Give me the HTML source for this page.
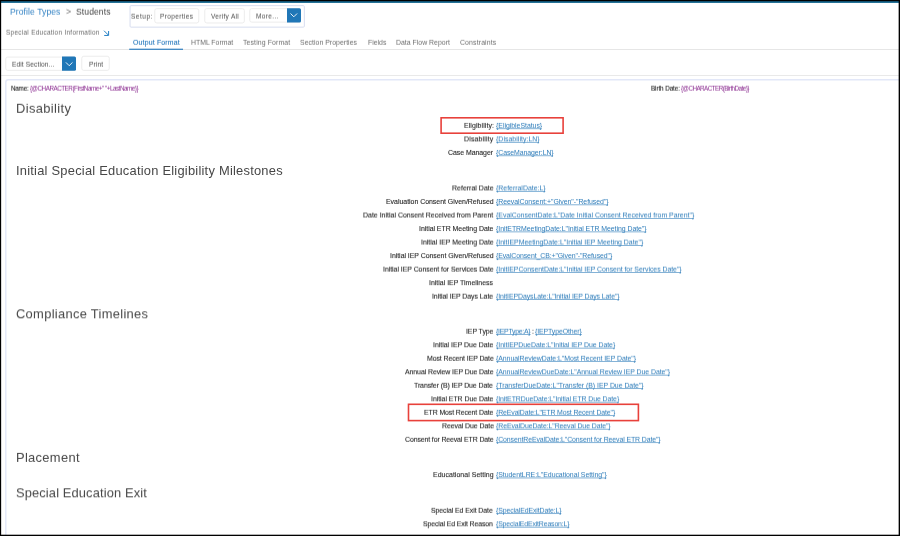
<!DOCTYPE html>
<html lang="en"><head><meta charset="utf-8"><title>Profile Types - Students - Special Education Information</title>
<style>
html,body{margin:0;padding:0;background:#fff;}
body{width:900px;height:536px;position:relative;overflow:hidden;font-family:"Liberation Sans", sans-serif;}
.t{position:absolute;white-space:pre;font-family:"Liberation Sans", sans-serif;}
#pg{position:absolute;left:0;top:0;width:900px;height:536px;overflow:hidden;filter:blur(0.35px);}
.b{position:absolute;box-sizing:border-box;}
h2.t{margin:0;font-weight:normal;}
a.t{text-decoration:none;cursor:pointer;}
header,nav,main,section,.toolbar,.ident{display:block;position:static;margin:0;padding:0;}
u{text-decoration:underline;text-decoration-color:rgba(43,123,185,0.62);}
.t,u{text-decoration-skip-ink:none;text-underline-offset:0px;text-decoration-thickness:1px;}
</style></head><body><div id="pg">
<svg class="b" style="left:0;top:0" width="900" height="536" viewBox="0 0 900 536"><defs><linearGradient id="tg" x1="0" y1="0" x2="0" y2="1"><stop offset="0" stop-color="#083f5c"/><stop offset="1" stop-color="#2f83aa"/></linearGradient></defs><rect x="1.00" y="1.00" width="898.00" height="2.00" fill="url(#tg)" /><rect x="130.05" y="5.65" width="174.30" height="21.50" rx="1" fill="none" stroke="#d3d9ee" stroke-width="0.9"/><rect x="154.75" y="8.65" width="44.00" height="14.30" rx="2" fill="none" stroke="#eaeaea" stroke-width="0.9"/><rect x="204.75" y="8.65" width="39.60" height="14.30" rx="2" fill="none" stroke="#eaeaea" stroke-width="0.9"/><rect x="249.75" y="8.65" width="50.80" height="13.50" rx="2" fill="none" stroke="#eaeaea" stroke-width="0.9"/><path d="M287 8.2 H299.5 Q301 8.2 301 9.7 V21.1 Q301 22.6 299.5 22.6 H287 Z" fill="#2077b7"/><rect x="1.00" y="49.00" width="898.00" height="0.90" fill="#e4e4e4" /><rect x="129.20" y="48.70" width="53.80" height="1.10" fill="#1f76bc" /><rect x="5.75" y="57.05" width="69.80" height="13.30" rx="2" fill="none" stroke="#eaeaea" stroke-width="0.9"/><path d="M62 56.6 H74.5 Q76 56.6 76 58.1 V69.3 Q76 70.8 74.5 70.8 H62 Z" fill="#2077b7"/><rect x="81.75" y="56.25" width="27.50" height="14.10" rx="2" fill="none" stroke="#eaeaea" stroke-width="0.9"/><rect x="1.00" y="75.00" width="898.00" height="0.80" fill="#e4e4e4" /><rect x="5.80" y="79.70" width="898.50" height="479.60" rx="2.5" fill="none" stroke="#e2e7f8" stroke-width="1.4"/><rect x="496.30" y="128.40" width="45.40" height="0.72" fill="#2b7bb9" opacity="0.8"/><rect x="496.30" y="141.92" width="42.80" height="0.72" fill="#2b7bb9" opacity="0.8"/><rect x="496.30" y="155.44" width="56.80" height="0.72" fill="#2b7bb9" opacity="0.8"/><rect x="496.30" y="190.95" width="49.00" height="0.72" fill="#2b7bb9" opacity="0.8"/><rect x="496.30" y="204.48" width="111.80" height="0.72" fill="#2b7bb9" opacity="0.8"/><rect x="496.30" y="218.01" width="197.40" height="0.72" fill="#2b7bb9" opacity="0.8"/><rect x="496.30" y="231.54" width="150.00" height="0.72" fill="#2b7bb9" opacity="0.8"/><rect x="496.30" y="245.07" width="146.40" height="0.72" fill="#2b7bb9" opacity="0.8"/><rect x="496.30" y="258.60" width="115.40" height="0.72" fill="#2b7bb9" opacity="0.8"/><rect x="496.30" y="272.13" width="184.80" height="0.72" fill="#2b7bb9" opacity="0.8"/><rect x="496.30" y="299.19" width="123.00" height="0.72" fill="#2b7bb9" opacity="0.8"/><rect x="496.10" y="334.25" width="34.50" height="0.72" fill="#2b7bb9" opacity="0.8"/><rect x="535.30" y="334.25" width="46.60" height="0.72" fill="#2b7bb9" opacity="0.8"/><rect x="496.30" y="347.76" width="118.40" height="0.72" fill="#2b7bb9" opacity="0.8"/><rect x="496.30" y="361.27" width="139.40" height="0.72" fill="#2b7bb9" opacity="0.8"/><rect x="496.30" y="374.78" width="173.40" height="0.72" fill="#2b7bb9" opacity="0.8"/><rect x="496.30" y="388.29" width="146.80" height="0.72" fill="#2b7bb9" opacity="0.8"/><rect x="496.30" y="401.80" width="122.40" height="0.72" fill="#2b7bb9" opacity="0.8"/><rect x="496.30" y="415.31" width="118.40" height="0.72" fill="#2b7bb9" opacity="0.8"/><rect x="496.30" y="428.82" width="113.80" height="0.72" fill="#2b7bb9" opacity="0.8"/><rect x="496.30" y="442.33" width="163.80" height="0.72" fill="#2b7bb9" opacity="0.8"/><rect x="496.30" y="477.60" width="110.10" height="0.72" fill="#2b7bb9" opacity="0.8"/><rect x="496.30" y="513.30" width="65.00" height="0.72" fill="#2b7bb9" opacity="0.8"/><rect x="496.30" y="526.80" width="73.00" height="0.72" fill="#2b7bb9" opacity="0.8"/><rect x="441.10" y="117.80" width="122.00" height="15.40" rx="0" fill="none" stroke="#e8413b" stroke-width="1.6"/><rect x="408.50" y="404.30" width="229.90" height="16.30" rx="0" fill="none" stroke="#e8413b" stroke-width="1.6"/><path d="M104.0 30.7 L108.4 35.1 M108.6 31.0 V35.45 H104.2" fill="none" stroke="#2580c5" stroke-width="1.0" /><path d="M290.5 13.5 L293.8 16.8 L297.1 13.5" fill="none" stroke="#fff" stroke-width="0.9" /><path d="M65.9 62.4 L69.2 65.7 L72.5 62.4" fill="none" stroke="#fff" stroke-width="0.9" /></svg>
<header>
<a class="t" id="t0" style="top:6.00px;font-size:8.6px;line-height:12px;color:#3483c4;left:10.16px;letter-spacing:0.075px;transform:translateY(-0.30px) perspective(1000px) rotateX(0.01deg);transform-origin:0 50%;">Profile Types</a>
<span class="t" id="t1" style="top:6.00px;font-size:8.8px;line-height:12px;color:#777;left:66.10px;transform:translateY(-0.40px) perspective(1000px) rotateX(0.01deg);transform-origin:0 50%;">&gt;</span>
<span class="t" id="t2" style="top:6.00px;font-size:8.6px;line-height:12px;color:#444;left:76.09px;letter-spacing:0.083px;transform:translateY(-0.30px) perspective(1000px) rotateX(0.01deg);transform-origin:0 50%;">Students</span>
<span class="t" id="t3" style="top:27.50px;font-size:6.4px;line-height:10px;color:#6a6a6a;left:5.57px;letter-spacing:0.304px;transform:translateY(-0.30px) perspective(1000px) rotateX(0.01deg);transform-origin:0 50%;">Special Education Information</span>
<span class="t" id="t4" style="top:11.50px;font-size:6.5px;line-height:10px;color:#4c4c4c;left:131.22px;letter-spacing:0.509px;transform:translateY(-0.30px) perspective(1000px) rotateX(0.01deg);transform-origin:0 50%;">Setup:</span>
<span class="t" id="t5" style="top:11.50px;font-size:6.5px;line-height:10px;color:#4c4c4c;left:160.25px;letter-spacing:0.374px;transform:translateY(-0.30px) perspective(1000px) rotateX(0.01deg);transform-origin:0 50%;">Properties</span>
<span class="t" id="t6" style="top:11.50px;font-size:6.5px;line-height:10px;color:#4c4c4c;left:210.64px;letter-spacing:0.321px;transform:translateY(-0.30px) perspective(1000px) rotateX(0.01deg);transform-origin:0 50%;">Verify All</span>
<span class="t" id="t7" style="top:11.50px;font-size:6.5px;line-height:10px;color:#4c4c4c;left:256.13px;letter-spacing:0.390px;transform:translateY(-0.50px) perspective(1000px) rotateX(0.01deg);transform-origin:0 50%;">More...</span>
</header>
<nav>
<span class="t" id="t8" style="top:37.50px;font-size:6.9px;line-height:10px;color:#1f74bb;left:132.62px;letter-spacing:0.185px;transform:translateY(-0.20px) perspective(1000px) rotateX(0.01deg);transform-origin:0 50%;-webkit-text-stroke:0.1px #1f74bb;">Output Format</span>
<span class="t" id="t9" style="top:37.50px;font-size:6.9px;line-height:10px;color:#6c6c6c;left:190.87px;letter-spacing:-0.011px;transform:translateY(-0.20px) perspective(1000px) rotateX(0.01deg);transform-origin:0 50%;">HTML Format</span>
<span class="t" id="t10" style="top:37.50px;font-size:6.9px;line-height:10px;color:#6c6c6c;left:242.87px;letter-spacing:0.125px;transform:translateY(-0.20px) perspective(1000px) rotateX(0.01deg);transform-origin:0 50%;">Testing Format</span>
<span class="t" id="t11" style="top:37.50px;font-size:6.9px;line-height:10px;color:#6c6c6c;left:299.98px;letter-spacing:0.042px;transform:translateY(-0.20px) perspective(1000px) rotateX(0.01deg);transform-origin:0 50%;">Section Properties</span>
<span class="t" id="t12" style="top:37.50px;font-size:6.9px;line-height:10px;color:#6c6c6c;left:367.87px;letter-spacing:-0.011px;transform:translateY(-0.20px) perspective(1000px) rotateX(0.01deg);transform-origin:0 50%;">Fields</span>
<span class="t" id="t13" style="top:37.50px;font-size:6.9px;line-height:10px;color:#6c6c6c;left:396.02px;letter-spacing:0.016px;transform:translateY(-0.20px) perspective(1000px) rotateX(0.01deg);transform-origin:0 50%;">Data Flow Report</span>
<span class="t" id="t14" style="top:37.50px;font-size:6.9px;line-height:10px;color:#6c6c6c;left:460.34px;letter-spacing:0.141px;transform:translateY(-0.20px) perspective(1000px) rotateX(0.01deg);transform-origin:0 50%;">Constraints</span>
</nav>
<div class="toolbar">
<span class="t" id="t15" style="top:59.50px;font-size:6.6px;line-height:10px;color:#4c4c4c;left:11.84px;letter-spacing:0.114px;transform:translateY(-0.30px) perspective(1000px) rotateX(0.01deg);transform-origin:0 50%;">Edit Section...</span>
<span class="t" id="t16" style="top:59.50px;font-size:6.6px;line-height:10px;color:#4c4c4c;left:88.55px;letter-spacing:0.160px;transform:translateY(-0.30px) perspective(1000px) rotateX(0.01deg);transform-origin:0 50%;">Print</span>
</div>
<main><div class="ident">
<span class="t" id="t17" style="top:83.50px;font-size:6.3px;line-height:10px;color:#222;left:10.50px;letter-spacing:-0.215px;transform:translateY(-0.30px) perspective(1000px) rotateX(0.01deg);transform-origin:0 50%;-webkit-text-stroke:0.1px #222;">Name:</span>
<span class="t" id="t18" style="top:83.50px;font-size:6.3px;line-height:10px;color:#8a2a8f;left:29.55px;letter-spacing:-0.480px;transform:translateY(-0.30px) perspective(1000px) rotateX(0.01deg);transform-origin:0 50%;">{@CHARACTER(FirstName+" "+LastName)}</span>
<span class="t" id="t19" style="top:83.50px;font-size:6.3px;line-height:10px;color:#222;left:651.00px;letter-spacing:-0.085px;transform:translateY(-0.30px) perspective(1000px) rotateX(0.01deg);transform-origin:0 50%;-webkit-text-stroke:0.1px #222;">Birth Date:</span>
<span class="t" id="t20" style="top:83.50px;font-size:6.3px;line-height:10px;color:#8a2a8f;left:681.45px;letter-spacing:-0.538px;transform:translateY(-0.30px) perspective(1000px) rotateX(0.01deg);transform-origin:0 50%;">{@CHARACTER(BirthDate)}</span>
</div>
<section>
<h2 class="t" id="t21" style="top:99.50px;font-size:12.9px;line-height:18px;color:#474747;left:16.10px;letter-spacing:0.368px;transform:translateY(-0.20px) perspective(1000px) rotateX(0.01deg);transform-origin:0 50%;">Disability</h2>
<span class="t" id="t22" style="top:120.50px;font-size:6.95px;line-height:10px;color:#1f1f1f;right:406.31px;letter-spacing:0.096px;margin-right:-0.096px;transform:translateY(-0.10px) perspective(1000px) rotateX(0.01deg);transform-origin:100% 50%;-webkit-text-stroke:0.1px #1f1f1f;">Eligibility:</span>
<a class="t" id="t23" style="top:120.50px;font-size:6.95px;line-height:10px;color:#2b7bb9;left:496.32px;letter-spacing:-0.032px;transform:translateY(-0.10px) perspective(1000px) rotateX(0.01deg);transform-origin:0 50%;">{EligibleStatus}</a>
<span class="t" id="t24" style="top:133.50px;font-size:6.95px;line-height:10px;color:#1f1f1f;right:406.63px;letter-spacing:0.167px;margin-right:-0.167px;transform:translateY(0.42px) perspective(1000px) rotateX(0.01deg);transform-origin:100% 50%;-webkit-text-stroke:0.1px #1f1f1f;">Disability</span>
<a class="t" id="t25" style="top:133.50px;font-size:6.95px;line-height:10px;color:#2b7bb9;left:496.32px;letter-spacing:0.034px;transform:translateY(0.42px) perspective(1000px) rotateX(0.01deg);transform-origin:0 50%;">{Disability:LN}</a>
<span class="t" id="t26" style="top:147.50px;font-size:6.95px;line-height:10px;color:#1f1f1f;right:406.77px;letter-spacing:-0.044px;margin-right:0.044px;transform:translateY(-0.06px) perspective(1000px) rotateX(0.01deg);transform-origin:100% 50%;-webkit-text-stroke:0.1px #1f1f1f;">Case Manager</span>
<a class="t" id="t27" style="top:147.50px;font-size:6.95px;line-height:10px;color:#2b7bb9;left:496.32px;letter-spacing:-0.090px;transform:translateY(-0.06px) perspective(1000px) rotateX(0.01deg);transform-origin:0 50%;">{CaseManager:LN}</a>
</section>
<section>
<h2 class="t" id="t28" style="top:161.50px;font-size:12.9px;line-height:18px;color:#474747;left:16.00px;letter-spacing:0.230px;transform:translateY(0.00px) perspective(1000px) rotateX(0.01deg);transform-origin:0 50%;">Initial Special Education Eligibility Milestones</h2>
<span class="t" id="t29" style="top:182.50px;font-size:6.95px;line-height:10px;color:#1f1f1f;right:406.50px;letter-spacing:0.028px;margin-right:-0.028px;transform:translateY(0.45px) perspective(1000px) rotateX(0.01deg);transform-origin:100% 50%;-webkit-text-stroke:0.1px #1f1f1f;">Referral Date</span>
<a class="t" id="t30" style="top:182.50px;font-size:6.95px;line-height:10px;color:#2b7bb9;left:496.32px;letter-spacing:-0.010px;transform:translateY(0.45px) perspective(1000px) rotateX(0.01deg);transform-origin:0 50%;">{ReferralDate:L}</a>
<span class="t" id="t31" style="top:196.50px;font-size:6.95px;line-height:10px;color:#1f1f1f;right:406.31px;letter-spacing:-0.013px;margin-right:0.013px;transform:translateY(-0.02px) perspective(1000px) rotateX(0.01deg);transform-origin:100% 50%;-webkit-text-stroke:0.1px #1f1f1f;">Evaluation Consent Given/Refused</span>
<a class="t" id="t32" style="top:196.50px;font-size:6.95px;line-height:10px;color:#2b7bb9;left:496.32px;letter-spacing:-0.046px;transform:translateY(-0.02px) perspective(1000px) rotateX(0.01deg);transform-origin:0 50%;">{ReevalConsent:+"Given"-"Refused"}</a>
<span class="t" id="t33" style="top:210.50px;font-size:6.95px;line-height:10px;color:#1f1f1f;right:406.86px;letter-spacing:0.017px;margin-right:-0.017px;transform:translateY(-0.49px) perspective(1000px) rotateX(0.01deg);transform-origin:100% 50%;-webkit-text-stroke:0.1px #1f1f1f;">Date Initial Consent Received from Parent</span>
<a class="t" id="t34" style="top:210.50px;font-size:6.95px;line-height:10px;color:#2b7bb9;left:496.32px;letter-spacing:-0.011px;transform:translateY(-0.49px) perspective(1000px) rotateX(0.01deg);transform-origin:0 50%;">{EvalConsentDate:L"Date Initial Consent Received from Parent"}</a>
<span class="t" id="t35" style="top:223.50px;font-size:6.95px;line-height:10px;color:#1f1f1f;right:406.74px;letter-spacing:-0.031px;margin-right:0.031px;transform:translateY(0.04px) perspective(1000px) rotateX(0.01deg);transform-origin:100% 50%;-webkit-text-stroke:0.1px #1f1f1f;">Initial ETR Meeting Date</span>
<a class="t" id="t36" style="top:223.50px;font-size:6.95px;line-height:10px;color:#2b7bb9;left:496.32px;letter-spacing:-0.051px;transform:translateY(0.04px) perspective(1000px) rotateX(0.01deg);transform-origin:0 50%;">{InitETRMeetingDate:L"Initial ETR Meeting Date"}</a>
<span class="t" id="t37" style="top:237.50px;font-size:6.95px;line-height:10px;color:#1f1f1f;right:406.31px;letter-spacing:0.014px;margin-right:-0.014px;transform:translateY(-0.43px) perspective(1000px) rotateX(0.01deg);transform-origin:100% 50%;-webkit-text-stroke:0.1px #1f1f1f;">Initial IEP Meeting Date</span>
<a class="t" id="t38" style="top:237.50px;font-size:6.95px;line-height:10px;color:#2b7bb9;left:496.32px;letter-spacing:-0.006px;transform:translateY(-0.43px) perspective(1000px) rotateX(0.01deg);transform-origin:0 50%;">{InitIEPMeetingDate:L"Initial IEP Meeting Date"}</a>
<span class="t" id="t39" style="top:250.50px;font-size:6.95px;line-height:10px;color:#1f1f1f;right:406.31px;letter-spacing:-0.034px;margin-right:0.034px;transform:translateY(0.10px) perspective(1000px) rotateX(0.01deg);transform-origin:100% 50%;-webkit-text-stroke:0.1px #1f1f1f;">Initial IEP Consent Given/Refused</span>
<a class="t" id="t40" style="top:250.50px;font-size:6.95px;line-height:10px;color:#2b7bb9;left:496.32px;letter-spacing:-0.099px;transform:translateY(0.10px) perspective(1000px) rotateX(0.01deg);transform-origin:0 50%;">{EvalConsent_CB:+"Given"-"Refused"}</a>
<span class="t" id="t41" style="top:264.50px;font-size:6.95px;line-height:10px;color:#1f1f1f;right:406.31px;letter-spacing:-0.039px;margin-right:0.039px;transform:translateY(-0.37px) perspective(1000px) rotateX(0.01deg);transform-origin:100% 50%;-webkit-text-stroke:0.1px #1f1f1f;">Initial IEP Consent for Services Date</span>
<a class="t" id="t42" style="top:264.50px;font-size:6.95px;line-height:10px;color:#2b7bb9;left:496.32px;letter-spacing:-0.045px;transform:translateY(-0.37px) perspective(1000px) rotateX(0.01deg);transform-origin:0 50%;">{InitIEPConsentDate:L"Initial IEP Consent for Services Date"}</a>
<span class="t" id="t43" style="top:277.50px;font-size:6.95px;line-height:10px;color:#1f1f1f;right:406.59px;letter-spacing:0.007px;margin-right:-0.007px;transform:translateY(0.16px) perspective(1000px) rotateX(0.01deg);transform-origin:100% 50%;-webkit-text-stroke:0.1px #1f1f1f;">Initial IEP Timeliness</span>
<span class="t" id="t44" style="top:291.50px;font-size:6.95px;line-height:10px;color:#1f1f1f;right:406.50px;letter-spacing:-0.062px;margin-right:0.062px;transform:translateY(-0.31px) perspective(1000px) rotateX(0.01deg);transform-origin:100% 50%;-webkit-text-stroke:0.1px #1f1f1f;">Initial IEP Days Late</span>
<a class="t" id="t45" style="top:291.50px;font-size:6.95px;line-height:10px;color:#2b7bb9;left:496.32px;letter-spacing:-0.094px;transform:translateY(-0.31px) perspective(1000px) rotateX(0.01deg);transform-origin:0 50%;">{InitIEPDaysLate:L"Initial IEP Days Late"}</a>
</section>
<section>
<h2 class="t" id="t46" style="top:304.50px;font-size:12.9px;line-height:18px;color:#474747;left:15.80px;letter-spacing:0.311px;transform:translateY(0.30px) perspective(1000px) rotateX(0.01deg);transform-origin:0 50%;">Compliance Timelines</h2>
<span class="t" id="t47" style="top:326.50px;font-size:6.95px;line-height:10px;color:#1f1f1f;right:406.74px;letter-spacing:-0.062px;margin-right:0.062px;transform:translateY(-0.25px) perspective(1000px) rotateX(0.01deg);transform-origin:100% 50%;-webkit-text-stroke:0.1px #1f1f1f;">IEP Type</span>
<a class="t" id="t48" style="top:326.50px;font-size:6.95px;line-height:10px;color:#2b7bb9;left:496.30px;letter-spacing:-0.281px;transform:translateY(-0.25px) perspective(1000px) rotateX(0.01deg);transform-origin:0 50%;">{IEPType:A}</a>
<span class="t" id="t49" style="top:326.50px;font-size:6.95px;line-height:10px;color:#1f1f1f;left:532.20px;transform:translateY(-0.25px) perspective(1000px) rotateX(0.01deg);transform-origin:0 50%;-webkit-text-stroke:0.1px #1f1f1f;">:</span>
<a class="t" id="t50" style="top:326.50px;font-size:6.95px;line-height:10px;color:#2b7bb9;left:535.30px;letter-spacing:-0.101px;transform:translateY(-0.25px) perspective(1000px) rotateX(0.01deg);transform-origin:0 50%;">{IEPTypeOther}</a>
<span class="t" id="t51" style="top:339.50px;font-size:6.95px;line-height:10px;color:#1f1f1f;right:406.67px;letter-spacing:-0.005px;margin-right:0.005px;transform:translateY(0.26px) perspective(1000px) rotateX(0.01deg);transform-origin:100% 50%;-webkit-text-stroke:0.1px #1f1f1f;">Initial IEP Due Date</span>
<a class="t" id="t52" style="top:339.50px;font-size:6.95px;line-height:10px;color:#2b7bb9;left:496.32px;letter-spacing:-0.050px;transform:translateY(0.26px) perspective(1000px) rotateX(0.01deg);transform-origin:0 50%;">{InitIEPDueDate:L"Initial IEP Due Date}</a>
<span class="t" id="t53" style="top:353.50px;font-size:6.95px;line-height:10px;color:#1f1f1f;right:406.67px;letter-spacing:-0.089px;margin-right:0.089px;transform:translateY(-0.23px) perspective(1000px) rotateX(0.01deg);transform-origin:100% 50%;-webkit-text-stroke:0.1px #1f1f1f;">Most Recent IEP Date</span>
<a class="t" id="t54" style="top:353.50px;font-size:6.95px;line-height:10px;color:#2b7bb9;left:496.32px;letter-spacing:-0.069px;transform:translateY(-0.23px) perspective(1000px) rotateX(0.01deg);transform-origin:0 50%;">{AnnualReviewDate:L"Most Recent IEP Date"}</a>
<span class="t" id="t55" style="top:366.50px;font-size:6.95px;line-height:10px;color:#1f1f1f;right:406.79px;letter-spacing:-0.079px;margin-right:0.079px;transform:translateY(0.28px) perspective(1000px) rotateX(0.01deg);transform-origin:100% 50%;-webkit-text-stroke:0.1px #1f1f1f;">Annual Review IEP Due Date</span>
<a class="t" id="t56" style="top:366.50px;font-size:6.95px;line-height:10px;color:#2b7bb9;left:496.32px;letter-spacing:-0.071px;transform:translateY(0.28px) perspective(1000px) rotateX(0.01deg);transform-origin:0 50%;">{AnnualReviewDueDate:L"Annual Review IEP Due Date"}</a>
<span class="t" id="t57" style="top:380.50px;font-size:6.95px;line-height:10px;color:#1f1f1f;right:406.67px;letter-spacing:-0.088px;margin-right:0.088px;transform:translateY(-0.21px) perspective(1000px) rotateX(0.01deg);transform-origin:100% 50%;-webkit-text-stroke:0.1px #1f1f1f;">Transfer (B) IEP Due Date</span>
<a class="t" id="t58" style="top:380.50px;font-size:6.95px;line-height:10px;color:#2b7bb9;left:496.32px;letter-spacing:-0.036px;transform:translateY(-0.21px) perspective(1000px) rotateX(0.01deg);transform-origin:0 50%;">{TransferDueDate:L"Transfer (B) IEP Due Date"}</a>
<span class="t" id="t59" style="top:393.50px;font-size:6.95px;line-height:10px;color:#1f1f1f;right:406.74px;letter-spacing:-0.041px;margin-right:0.041px;transform:translateY(0.30px) perspective(1000px) rotateX(0.01deg);transform-origin:100% 50%;-webkit-text-stroke:0.1px #1f1f1f;">Initial ETR Due Date</span>
<a class="t" id="t60" style="top:393.50px;font-size:6.95px;line-height:10px;color:#2b7bb9;left:496.32px;letter-spacing:-0.090px;transform:translateY(0.30px) perspective(1000px) rotateX(0.01deg);transform-origin:0 50%;">{InitETRDueDate:L"Initial ETR Due Date}</a>
<span class="t" id="t61" style="top:407.50px;font-size:6.95px;line-height:10px;color:#1f1f1f;right:406.74px;letter-spacing:-0.104px;margin-right:0.104px;transform:translateY(-0.19px) perspective(1000px) rotateX(0.01deg);transform-origin:100% 50%;-webkit-text-stroke:0.1px #1f1f1f;">ETR Most Recent Date</span>
<a class="t" id="t62" style="top:407.50px;font-size:6.95px;line-height:10px;color:#2b7bb9;left:496.32px;letter-spacing:-0.128px;transform:translateY(-0.19px) perspective(1000px) rotateX(0.01deg);transform-origin:0 50%;">{ReEvalDate:L"ETR Most Recent Date"}</a>
<span class="t" id="t63" style="top:420.50px;font-size:6.95px;line-height:10px;color:#1f1f1f;right:406.50px;letter-spacing:-0.060px;margin-right:0.060px;transform:translateY(0.32px) perspective(1000px) rotateX(0.01deg);transform-origin:100% 50%;-webkit-text-stroke:0.1px #1f1f1f;">Reeval Due Date</span>
<a class="t" id="t64" style="top:420.50px;font-size:6.95px;line-height:10px;color:#2b7bb9;left:496.32px;letter-spacing:-0.099px;transform:translateY(0.32px) perspective(1000px) rotateX(0.01deg);transform-origin:0 50%;">{ReEvalDueDate:L"Reeval Due Date"}</a>
<span class="t" id="t65" style="top:434.50px;font-size:6.95px;line-height:10px;color:#1f1f1f;right:406.67px;letter-spacing:-0.117px;margin-right:0.117px;transform:translateY(-0.17px) perspective(1000px) rotateX(0.01deg);transform-origin:100% 50%;-webkit-text-stroke:0.1px #1f1f1f;">Consent for Reeval ETR Date</span>
<a class="t" id="t66" style="top:434.50px;font-size:6.95px;line-height:10px;color:#2b7bb9;left:496.32px;letter-spacing:-0.108px;transform:translateY(-0.17px) perspective(1000px) rotateX(0.01deg);transform-origin:0 50%;">{ConsentReEvalDate:L"Consent for Reeval ETR Date"}</a>
</section>
<section>
<h2 class="t" id="t67" style="top:448.50px;font-size:12.9px;line-height:18px;color:#474747;left:16.00px;letter-spacing:0.324px;transform:translateY(-0.10px) perspective(1000px) rotateX(0.01deg);transform-origin:0 50%;">Placement</h2>
<span class="t" id="t68" style="top:469.50px;font-size:6.95px;line-height:10px;color:#1f1f1f;right:406.31px;letter-spacing:0.044px;margin-right:-0.044px;transform:translateY(0.10px) perspective(1000px) rotateX(0.01deg);transform-origin:100% 50%;-webkit-text-stroke:0.1px #1f1f1f;">Educational Setting</span>
<a class="t" id="t69" style="top:469.50px;font-size:6.95px;line-height:10px;color:#2b7bb9;left:496.32px;letter-spacing:-0.051px;transform:translateY(0.10px) perspective(1000px) rotateX(0.01deg);transform-origin:0 50%;">{StudentLRE:L"Educational Setting"}</a>
</section>
<section>
<h2 class="t" id="t70" style="top:483.50px;font-size:12.9px;line-height:18px;color:#474747;left:15.80px;letter-spacing:0.120px;transform:translateY(0.30px) perspective(1000px) rotateX(0.01deg);transform-origin:0 50%;">Special Education Exit</h2>
<span class="t" id="t71" style="top:505.50px;font-size:6.95px;line-height:10px;color:#1f1f1f;right:406.79px;letter-spacing:-0.077px;margin-right:0.077px;transform:translateY(-0.20px) perspective(1000px) rotateX(0.01deg);transform-origin:100% 50%;-webkit-text-stroke:0.1px #1f1f1f;">Special Ed Exit Date</span>
<a class="t" id="t72" style="top:505.50px;font-size:6.95px;line-height:10px;color:#2b7bb9;left:496.32px;letter-spacing:-0.114px;transform:translateY(-0.20px) perspective(1000px) rotateX(0.01deg);transform-origin:0 50%;">{SpecialEdExitDate:L}</a>
<span class="t" id="t73" style="top:518.50px;font-size:6.95px;line-height:10px;color:#1f1f1f;right:406.65px;letter-spacing:-0.123px;margin-right:0.123px;transform:translateY(0.30px) perspective(1000px) rotateX(0.01deg);transform-origin:100% 50%;-webkit-text-stroke:0.1px #1f1f1f;">Special Ed Exit Reason</span>
<a class="t" id="t74" style="top:518.50px;font-size:6.95px;line-height:10px;color:#2b7bb9;left:496.32px;letter-spacing:-0.161px;transform:translateY(0.30px) perspective(1000px) rotateX(0.01deg);transform-origin:0 50%;">{SpecialEdExitReason:L}</a>
</section></main>
</div><svg class="b" style="left:0;top:0" width="900" height="536" viewBox="0 0 900 536"><rect x="0" y="0" width="900" height="1" fill="#000"/><rect x="0" y="0" width="1.15" height="536" fill="#000"/><rect x="898.65" y="0" width="1.35" height="536" fill="#000"/><rect x="0" y="534.7" width="900" height="1.3" fill="#000"/></svg></body></html>
